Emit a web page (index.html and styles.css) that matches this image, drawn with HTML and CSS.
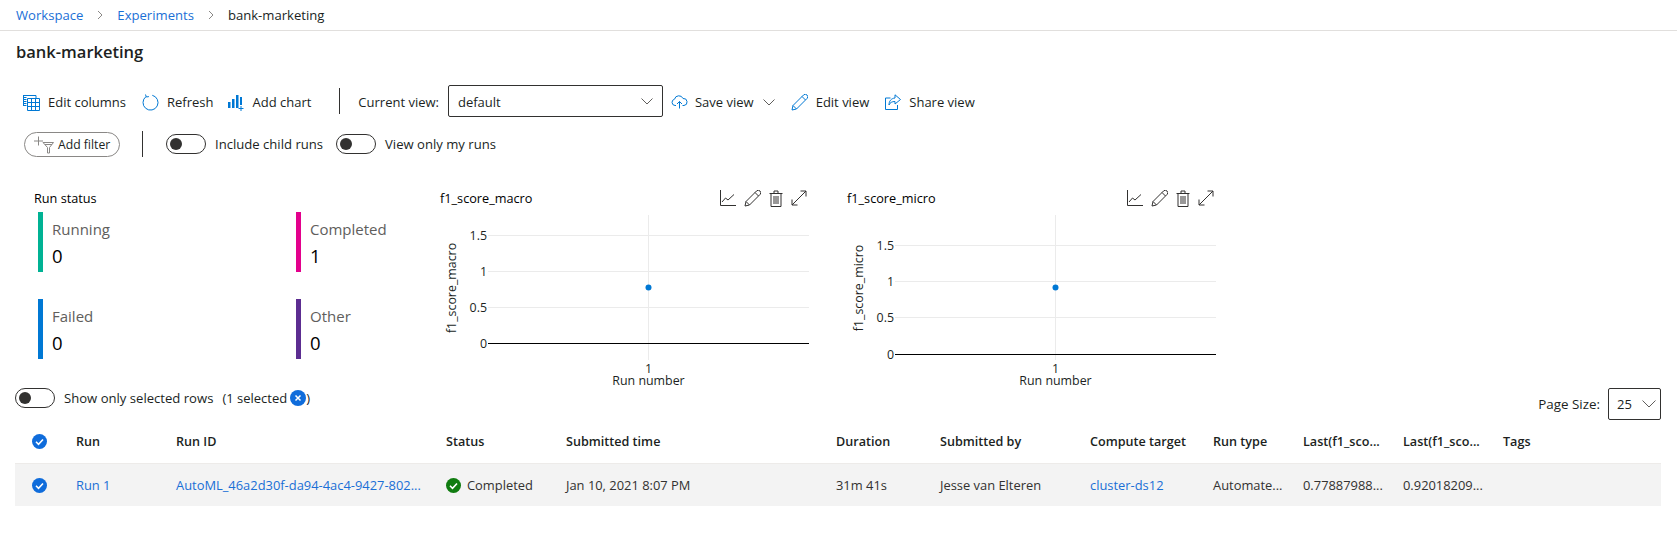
FILE: index.html
```html
<!DOCTYPE html>
<html lang="en">
<head>
<meta charset="utf-8">
<title>bank-marketing</title>
<link rel="stylesheet" href="styles.css">
</head>
<body>
<nav class="crumbs">
  <a class="link">Workspace</a>
  <svg class="crumb-sep" width="10" height="10" viewBox="0 0 10 10"><path d="M3 1l4 4-4 4"/></svg>
  <a class="link">Experiments</a>
  <svg class="crumb-sep" width="10" height="10" viewBox="0 0 10 10"><path d="M3 1l4 4-4 4"/></svg>
  <span>bank-marketing</span>
</nav>
<h1 class="title">bank-marketing</h1>

<div class="toolbar">
  <button class="cmd cmd-edit">
    <svg class="ico" width="17" height="17" viewBox="0 0 17 17"><path d="M.5 1.500h3M.5 3.500h3M.5 5.500h3M.5 7.500h3M.5 9.500h3M.5 11.500h3"/><path d="M.5 1v11"/><path d="M3 1.500h10v3M4.500 4.500h12v12h-12zM4.500 8.500h12M4.500 12.500h12M8.500 4.500v12M12.500 4.500v12"/></svg>
    Edit columns</button>
  <button class="cmd cmd-refresh">
    <svg class="ico" width="17" height="17" viewBox="0 0 17 17"><path d="M10.300 1.300A7.500 7.500 0 1 1 4 2.600M3.500 .5l.8 2.500 2.600-.4"/></svg>
    Refresh</button>
  <button class="cmd cmd-chart">
    <svg width="16" height="17" viewBox="0 0 16 17"><path class="fill" d="M0 8h2.500v6H0zM4 5h2.500v9H4zM8 1h2.500v13H8zM12 3h2v8h-2z"/><path class="ico-line" d="M13 12v5M10.500 14.500h5"/></svg>
    Add chart</button>
  <span class="divider"></span>
  <label class="view-label">Current view:</label>
  <div class="select view-select">
    <span class="select-value">default</span>
    <svg class="chev" width="12" height="7" viewBox="0 0 12 7"><path d="M.5.500l5.500 5.500 5.500-5.500"/></svg>
  </div>
  <button class="cmd cmd-save">
    <svg class="ico" width="17" height="14" viewBox="0 0 17 14"><path d="M5 10.500H4A3.200 3.200 0 0 1 3.500 4.200 4.500 4.500 0 0 1 12 3.500a3.500 3.500 0 0 1 1 7h-1.500"/><path d="M8.500 13.500V6.500M6 9l2.500-2.500L11 9"/></svg>
    Save view
    <svg class="chev chev-save" width="12" height="7" viewBox="0 0 12 7"><path d="M.5.500l5.500 5.500 5.500-5.500"/></svg>
  </button>
  <button class="cmd cmd-editview">
    <svg class="ico" width="17" height="17" viewBox="0 0 17 17"><path d="M1 16l1-4.500L12.500 1a2 2 0 0 1 3.500 3.500L5.500 15zM2 11.500L5.500 15M11 2.500l3.500 3.500"/></svg>
    Edit view</button>
  <button class="cmd cmd-share">
    <svg class="ico" width="16" height="16" viewBox="0 0 16 16"><path d="M5.500 4H.5v11.500h12V11"/><path d="M10 .8l5.500 4.700-5.500 4.500V7.500C7 7.500 5 8.500 4 11c0-4 2-6.500 6-7z"/></svg>
    Share view</button>
</div>

<div class="filters">
  <button class="pill">
    <svg class="pill-ico" width="20" height="18" viewBox="0 0 20 18"><path d="M0 5h9M4.500 .5v9M9 6.500h10.500L15.500 11.500v5.500h-2v-5.500zM11 8.500h7"/></svg>
    Add filter</button>
  <span class="divider divider-filter"></span>
  <span class="toggle"></span><span class="toggle-text toggle-text-a">Include child runs</span>
  <span class="toggle"></span><span class="toggle-text">View only my runs</span>
</div>

<section class="dash">
  <div class="status">
    <div class="panel-title">Run status</div>
    <div class="status-grid">
      <div class="stat stat-running"><div class="stat-label">Running</div><div class="stat-num">0</div></div>
      <div class="stat stat-completed"><div class="stat-label">Completed</div><div class="stat-num">1</div></div>
      <div class="stat stat-failed"><div class="stat-label">Failed</div><div class="stat-num">0</div></div>
      <div class="stat stat-other"><div class="stat-label">Other</div><div class="stat-num">0</div></div>
    </div>
  </div>

  <div class="chart">
    <div class="chart-head">
      <span class="panel-title">f1_score_macro</span>
      <span class="chart-tools">
        <svg width="16" height="16" viewBox="0 0 16 16"><path d="M.5 0v15.500H16M2 12l3.500-4 2.500 2 6-5.500"/></svg>
        <svg width="17" height="17" viewBox="0 0 17 17"><path d="M1 16l1-4.500L12.500 1a2 2 0 0 1 3.500 3.500L5.500 15zM2 11.500L5.500 15M11 2.500l3.500 3.500"/></svg>
        <svg width="14" height="17" viewBox="0 0 14 17"><path d="M.5 3.500h13M2 3.500v13h10v-13M5 3.500V1h4v2.500M5 6v8M7 6v8M9 6v8"/></svg>
        <svg width="16" height="16" viewBox="0 0 16 16"><path d="M1 15L15 1M9.500 1H15v5.500M1 9.500V15h5.500"/></svg>
      </span>
    </div>
    <svg class="plot" width="407" height="178" viewBox="0 0 407 178">
      <path class="grid" d="M218.500 5v145M58 25.500h321M58 61.500h321M58 97.500h321"/>
      <path class="axis" d="M58 133.500h321"/>
      <text class="tick" x="57" y="30" text-anchor="end">1.5</text>
      <text class="tick" x="57" y="66" text-anchor="end">1</text>
      <text class="tick" x="57" y="102" text-anchor="end">0.5</text>
      <text class="tick" x="57" y="138" text-anchor="end">0</text>
      <text class="tick" x="218.500" y="163" text-anchor="middle">1</text>
      <text class="tick" x="218.500" y="175" text-anchor="middle">Run number</text>
      <text class="tick" transform="translate(25.500 78) rotate(-90)" text-anchor="middle">f1_score_macro</text>
      <circle class="dot" cx="218.500" cy="77.500" r="3"/>
    </svg>
  </div>

  <div class="chart">
    <div class="chart-head">
      <span class="panel-title">f1_score_micro</span>
      <span class="chart-tools">
        <svg width="16" height="16" viewBox="0 0 16 16"><path d="M.5 0v15.500H16M2 12l3.500-4 2.500 2 6-5.500"/></svg>
        <svg width="17" height="17" viewBox="0 0 17 17"><path d="M1 16l1-4.500L12.500 1a2 2 0 0 1 3.500 3.500L5.500 15zM2 11.500L5.500 15M11 2.500l3.500 3.500"/></svg>
        <svg width="14" height="17" viewBox="0 0 14 17"><path d="M.5 3.500h13M2 3.500v13h10v-13M5 3.500V1h4v2.500M5 6v8M7 6v8M9 6v8"/></svg>
        <svg width="16" height="16" viewBox="0 0 16 16"><path d="M1 15L15 1M9.500 1H15v5.500M1 9.500V15h5.500"/></svg>
      </span>
    </div>
    <svg class="plot" width="407" height="178" viewBox="0 0 407 178">
      <path class="grid" d="M218.500 5v145M58 35.500h321M58 71.500h321M58 107.500h321"/>
      <path class="axis" d="M58 144.500h321"/>
      <text class="tick" x="57" y="40" text-anchor="end">1.5</text>
      <text class="tick" x="57" y="76" text-anchor="end">1</text>
      <text class="tick" x="57" y="112" text-anchor="end">0.5</text>
      <text class="tick" x="57" y="149" text-anchor="end">0</text>
      <text class="tick" x="218.500" y="163" text-anchor="middle">1</text>
      <text class="tick" x="218.500" y="175" text-anchor="middle">Run number</text>
      <text class="tick" transform="translate(25.500 78) rotate(-90)" text-anchor="middle">f1_score_micro</text>
      <circle class="dot" cx="218.500" cy="77.500" r="3"/>
    </svg>
  </div>
</section>

<div class="selbar">
  <span class="toggle"></span>
  <span class="toggle-text">Show only selected rows</span>
  <span class="sel-count">(1 selected</span>
  <svg class="sel-x" width="16" height="16" viewBox="0 0 16 16"><circle cx="8" cy="8" r="8"/><path d="M5.500 5.500l5 5M10.500 5.500l-5 5"/></svg>
  <span class="sel-end">)</span>
  <span class="page-label">Page Size:</span>
  <div class="select page-select">
    <span>25</span>
    <svg class="chev" width="14" height="8" viewBox="0 0 14 8"><path d="M.5.500l6.500 6.500 6.500-6.500"/></svg>
  </div>
</div>

<div class="table">
  <div class="tr th">
    <span class="cell"><svg class="check" width="15" height="15" viewBox="0 0 15 15"><circle cx="7.500" cy="7.500" r="7.500"/><path d="M4 7.800l2.500 2.500L11 5.500"/></svg></span>
    <span class="cell">Run</span>
    <span class="cell">Run ID</span>
    <span class="cell">Status</span>
    <span class="cell">Submitted time</span>
    <span class="cell">Duration</span>
    <span class="cell">Submitted by</span>
    <span class="cell">Compute target</span>
    <span class="cell">Run type</span>
    <span class="cell">Last(f1_sco...</span>
    <span class="cell">Last(f1_sco...</span>
    <span class="cell">Tags</span>
  </div>
  <div class="tr td">
    <span class="cell"><svg class="check" width="15" height="15" viewBox="0 0 15 15"><circle cx="7.500" cy="7.500" r="7.500"/><path d="M4 7.800l2.500 2.500L11 5.500"/></svg></span>
    <a class="cell link">Run 1</a>
    <a class="cell link">AutoML_46a2d30f-da94-4ac4-9427-802...</a>
    <span class="cell status-cell"><svg class="check check-ok" width="15" height="15" viewBox="0 0 15 15"><circle cx="7.500" cy="7.500" r="7.500"/><path d="M4 7.800l2.500 2.500L11 5.500"/></svg>Completed</span>
    <span class="cell">Jan 10, 2021 8:07 PM</span>
    <span class="cell">31m 41s</span>
    <span class="cell">Jesse van Elteren</span>
    <a class="cell link">cluster-ds12</a>
    <span class="cell">Automate...</span>
    <span class="cell">0.77887988...</span>
    <span class="cell">0.92018209...</span>
    <span class="cell"></span>
  </div>
</div>
</body>
</html>
```
FILE: styles.css
```css
* { box-sizing: border-box; }
html, body { margin: 0; padding: 0; background: #fff; }
body {
  font-family: "Open Sans", "Noto Sans", sans-serif;
  font-size: 13px;
  color: #201f1e;
  width: 1677px;
  height: 535px;
  overflow: hidden;
}
svg { display: block; flex: none; }
button { font: inherit; color: inherit; background: none; border: 0; padding: 0; }
.link { color: #1a6fd6; }

.crumbs {
  display: flex;
  align-items: center;
  height: 31px;
  padding: 0 0 1px 16px;
  border-bottom: 1px solid #e1dfdd;
  font-size: 13.100px;
}
.crumb-sep { margin: 0 12px 0 12px; stroke: #8a8886; stroke-width: 1; }
.title {
  margin: 0;
  height: 54px;
  padding: 10px 0 0 16px;
  font-size: 16.500px;
  line-height: 22px;
  font-weight: 600;
  color: #201f1e;
}

.toolbar {
  display: flex;
  align-items: center;
  height: 32px;
  padding-left: 23px;
}
.cmd { display: flex; align-items: center; gap: 8px; white-space: nowrap; padding-top: 2px; }
.view-label { padding-top: 2px; }
.select-value { padding-top: 2px; }
.ico, .chev, .chart-tools svg, .pill-ico, .crumb-sep { fill: none; }
.ico { stroke: #0078d4; stroke-width: 1; }
.ico-line { stroke: #0078d4; fill: none; }
.fill { fill: #0078d4; }
.chev { stroke: #605e5c; stroke-width: 1; }
.cmd-refresh { margin-left: 16px; }
.cmd-chart { margin-left: 15px; gap: 8px; }
.divider { width: 1px; height: 26px; background: #323130; margin: 0 18px 0 28px; flex: none; }
.view-label { margin-right: 9px; }
.select {
  display: flex;
  align-items: center;
  justify-content: space-between;
  border: 1px solid #323130;
  border-radius: 2px;
}
.view-select { width: 215px; height: 32px; padding: 0 9px 0 9px; }
.cmd-save { margin-left: 8px; gap: 7px; }
.chev-save { margin-left: 2px; }
.cmd-editview { margin-left: 16px; }
.cmd-share { margin-left: 16px; }

.filters {
  display: flex;
  align-items: center;
  height: 26px;
  margin-top: 14px;
  padding-left: 24px;
}
.pill {
  display: flex;
  align-items: center;
  gap: 4px;
  width: 96px;
  height: 25px;
  padding-left: 9px;
  border: 1px solid #8a8886;
  border-radius: 13px;
  font-size: 12.200px;
}
.pill-ico { stroke: #8a8886; stroke-width: 1; margin-top: 2px; }
.divider-filter { margin: 0 23px 0 22px; }
.toggle {
  position: relative;
  flex: none;
  display: block;
  width: 40px;
  height: 20px;
  border: 1px solid #323130;
  border-radius: 10px;
}
.toggle::after {
  content: "";
  position: absolute;
  left: 3px;
  top: 3px;
  width: 12px;
  height: 12px;
  border-radius: 50%;
  background: #323130;
}
.toggle-text { margin-left: 9px; font-size: 13.100px; }
.toggle-text-a { margin-right: 13px; }

.dash {
  display: grid;
  grid-template-columns: 396px 407px 407px;
  height: 202px;
  margin-top: 29px;
  padding-left: 34px;
}
.panel-title { height: 24px; line-height: 24px; color: #000; font-size: 12.700px; }
.status-grid {
  display: grid;
  grid-template-columns: 258px 100px;
  grid-auto-rows: 60px;
  row-gap: 27px;
  padding: 2px 0 0 4px;
}
.stat { border-left: 5px solid; padding: 7px 0 0 9px; }
.stat-running { border-color: #00b294; }
.stat-completed { border-color: #e3008c; }
.stat-failed { border-color: #0078d4; }
.stat-other { border-color: #5c2d91; }
.stat-label { font-size: 15px; line-height: 20px; color: #605e5c; }
.stat-num { font-size: 18.500px; font-weight: 500; line-height: 26px; color: #000; margin-top: 4px; }

.chart-head {
  display: flex;
  justify-content: space-between;
  align-items: center;
  width: 377px;
  height: 24px;
  padding-left: 10px;
}
.chart-tools { display: flex; align-items: center; gap: 8px; }
.chart-tools svg { stroke: #323130; stroke-width: 1; }
.plot { overflow: visible; }
.grid { stroke: #ebebeb; stroke-width: 1; fill: none; }
.axis { stroke: #000; stroke-width: 1; fill: none; }
.tick { font-size: 12.400px; fill: #201f1e; }
.dot { fill: #0078d4; }

.selbar {
  display: flex;
  align-items: flex-start;
  height: 32px;
  width: 1661px;
  padding-left: 15px;
  line-height: 20px;
}
.toggle-text { line-height: 20px; }
.sel-count { margin-left: 9px; margin-right: 3px; }
.sel-x { margin-top: 2px; }
.sel-x circle { fill: #0f6cdb; }
.sel-x path { stroke: #fff; stroke-width: 1.500; fill: none; }
.page-label { margin-left: auto; margin-right: 8px; align-self: center; font-size: 13.400px; }
.page-select { width: 53px; height: 32px; padding: 0 4px 0 8px; }

.table { margin-left: 15px; width: 1646px; }
.tr {
  display: grid;
  grid-template-columns: 61px 100px 270px 120px 270px 104px 150px 123px 90px 100px 100px 1fr;
  align-items: center;
}
.th { height: 44px; font-size: 12.600px; font-weight: 600; border-bottom: 1px solid #edebe9; color: #201f1e; }
.td { height: 42px; font-size: 12.900px; background: #f3f3f3; color: #323130; }
.cell { display: flex; align-items: center; white-space: nowrap; }
.check { margin-left: 17px; }
.check circle { fill: #0f6cdb; }
.check path { stroke: #fff; stroke-width: 1.600; fill: none; }
.check-ok { margin: 0 6px 0 0; }
.check-ok circle { fill: #107c10; }
```
